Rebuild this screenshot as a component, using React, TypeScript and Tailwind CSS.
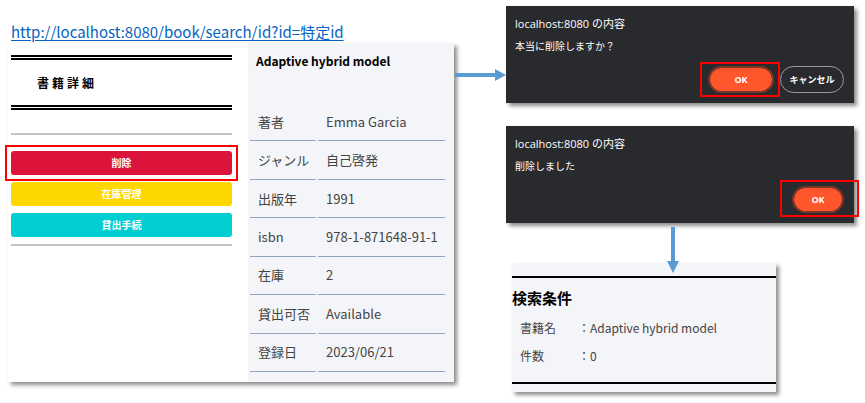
import type { ReactNode } from "react";

const details = [
  ["著者", "Emma Garcia"],
  ["ジャンル", "自己啓発"],
  ["出版年", "1991"],
  ["isbn", "978-1-871648-91-1"],
  ["在庫", "2"],
  ["貸出可否", "Available"],
  ["登録日", "2023/06/21"],
];

const panelShadow = "shadow-[3px_3px_4px_rgba(0,0,0,0.45)]";

function Highlight({ className, children }: { className: string; children: ReactNode }) {
  return (
    <div className="relative">
      {children}
      <span aria-hidden="true" className={`pointer-events-none absolute border-2 border-[#f00] ${className}`} />
    </div>
  );
}

function BookPanel() {
  return (
    <section className={`grid grid-cols-[minmax(0,240fr)_minmax(0,206fr)] bg-white ${panelShadow}`}>
      <div className="pt-3 pr-4 pl-[3px]">
        <h1 className="border-y-[5px] border-double border-black py-3 pl-[26px] text-[12px] leading-[21px] font-bold tracking-[3px]">
          書籍詳細
        </h1>
        <hr className="mt-[23px] mb-4 border-t-2 border-[#c4c4c4]" />
        <div className="flex flex-col gap-[7px] text-[10px] leading-6 font-bold text-white">
          <Highlight className="-inset-x-1.5 -top-[6px] -bottom-[6px]">
            <button className="block w-full rounded-[3px] bg-[#dc143c]">削除</button>
          </Highlight>
          <button className="rounded-[3px] bg-[#ffd700]">在庫管理</button>
          <button className="rounded-[3px] bg-[#00ced1]">貸出手続</button>
        </div>
        <hr className="mt-[7px] border-t-2 border-[#c4c4c4]" />
      </div>
      <div className="bg-[#f4f5f8] pr-[7px] pb-[10px]">
        <h2 className="pt-2 pl-2 text-[12px] leading-5 font-bold">Adaptive hybrid model</h2>
        <table className="mt-8 h-[269px] w-full table-fixed border-separate border-spacing-x-[2px] border-spacing-y-0 text-left text-[13px] leading-5 text-[#444]">
          <tbody>
            {details.map(([label, value]) => (
              <tr key={label}>
                <th scope="row" className="w-[66px] border-b border-[#93a5bb] py-0 pr-0 pl-2 font-normal whitespace-nowrap">
                  {label}
                </th>
                <td className="border-b border-[#93a5bb] py-0 pr-0 pl-2 whitespace-nowrap">{value}</td>
              </tr>
            ))}
          </tbody>
        </table>
      </div>
    </section>
  );
}

function Dialog({ message, children }: { message: string; children: ReactNode }) {
  return (
    <section
      role="dialog"
      aria-label={message}
      className={`bg-[#292a2d] px-[9px] pt-2 pb-[10px] font-['Open_Sans','Noto_Sans_CJK_JP',sans-serif] text-white ${panelShadow}`}
    >
      <h2 className="text-[11px] leading-5">localhost:8080 の内容</h2>
      <p className="mt-1 text-[10px] leading-4">{message}</p>
      <div className="mt-3 flex justify-end gap-1.5 pr-px text-[9px] leading-[25px] font-bold">{children}</div>
    </section>
  );
}

const okButton = "block h-[27px] rounded-full border-2 border-[#7c3526] bg-[#ff562b] bg-clip-padding leading-[23px] text-white";

export default function App() {
  return (
    <main className="bg-white pr-[11px] pb-3 pl-2 font-['Noto_Sans_CJK_JP',sans-serif] text-black">
      <div className="grid grid-cols-[446fr_52px_348fr] items-start">
        <div className="pt-5">
          <a
            href="http://localhost:8080/book/search/id?id=特定id"
            className="block pl-[3px] text-[15px] leading-[23px] whitespace-nowrap text-[#0563c1] underline underline-offset-2"
          >
            http://localhost:8080/book/search/id?id=特定id
          </a>
          <BookPanel />
        </div>

        <div className="pt-[69px]">
          <svg className="w-full" height="12" viewBox="0 0 52 12" fill="#5b9bd5" aria-hidden="true">
            <path d="M1 4H41V0L52 6L41 12V8H1Z" />
          </svg>
        </div>

        <div className="pt-1.5">
          <Dialog message="本当に削除しますか？">
            <Highlight className="-top-1 -right-1.5 -bottom-1 -left-2">
              <button className={`${okButton} w-[66px]`}>OK</button>
            </Highlight>
            <button className="h-[27px] w-[64px] rounded-full border border-[#9a9a9c] text-white">キャンセル</button>
          </Dialog>
          <div className="h-[23px]" />
          <Dialog message="削除しました">
            <Highlight className="-top-1.5 -right-[15px] -bottom-1 -left-3">
              <button className={`${okButton} w-[52px]`}>OK</button>
            </Highlight>
          </Dialog>
          <div className="relative z-10 flex h-10 justify-center pt-1 pr-[15px]">
            <svg className="shrink-0" width="12" height="46" viewBox="0 0 12 46" fill="#5b9bd5" aria-hidden="true">
              <path d="M4 0H8V34H12L6 46L0 34H4Z" />
            </svg>
          </div>
          <section className={`ml-1.5 w-[76%] bg-[#f4f5f8] pt-[13px] pb-2 ${panelShadow}`}>
            <div className="border-y-2 border-black pt-2 pb-3">
              <h2 className="text-[15px] leading-6 font-bold">検索条件</h2>
              <dl className="mt-1 grid grid-cols-[58px_1fr] px-2 text-[12px] leading-7 text-[#444]">
                <dt>書籍名</dt>
                <dd>：Adaptive hybrid model</dd>
                <dt>件数</dt>
                <dd>：0</dd>
              </dl>
            </div>
          </section>
        </div>
      </div>
    </main>
  );
}
